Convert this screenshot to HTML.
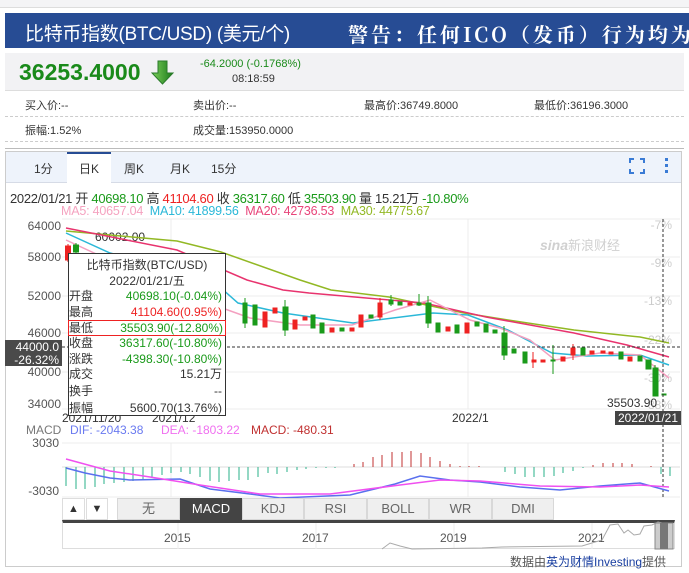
<!DOCTYPE html>
<html><head><meta charset="utf-8"><style>
*{margin:0;padding:0;box-sizing:border-box}
body{width:689px;height:573px;background:#fff;font-family:"Liberation Sans","Noto Sans CJK SC",sans-serif;position:relative;overflow:hidden;color:#333}
.a{position:absolute;white-space:nowrap}
.r{position:relative;height:15.5px}
.r b{font-weight:normal;position:absolute;right:3px}
</style></head><body>
<div class="a" style="left:0;top:0;width:689px;height:8px;background:#f4f4f6;border-bottom:1px solid #ddd"></div>
<div class="a" style="left:5px;top:13px;width:684px;height:35px;background:#274c94"></div>
<div class="a" style="left:25px;top:19px;font-size:19px;color:#fff;letter-spacing:-0.3px">比特币指数(BTC/USD) (美元/个)</div>
<div class="a" style="left:348px;top:19px;font-size:20px;color:#fff;font-weight:bold;font-family:'Noto Serif CJK SC',serif;letter-spacing:3px">警告：任何ICO（发币）行为均为</div>
<div class="a" style="left:5px;top:53px;width:679px;height:38px;background:#f2f2f4;border-bottom:1px solid #ddd"></div>
<div class="a" style="left:19px;top:59px;font-size:23px;font-weight:bold;color:#1a8a1a">36253.4000</div>
<svg class="a" style="left:151px;top:60px" width="24" height="25"><defs><linearGradient id="g" x1="0" x2="1"><stop offset="0" stop-color="#7ccf5a"/><stop offset="1" stop-color="#1a7a1a"/></linearGradient></defs><path d="M7 1h9v12h6L11.5 24 1 13h6z" fill="url(#g)" stroke="#2a7a2a"/></svg>
<div class="a" style="left:200px;top:58px;font-size:11px;color:#1a8a1a">-64.2000 (-0.1768%)</div>
<div class="a" style="left:232px;top:73px;font-size:11px;color:#333">08:18:59</div>
<div class="a" style="left:5px;top:116px;width:679px;border-top:1px dashed #ccc"></div>
<div class="a" style="left:5px;top:141px;width:679px;border-top:1px dashed #ccc"></div>
<div class="a" style="left:5px;top:148px;width:679px;border-top:1px solid #bbb"></div>
<div class="a" style="left:25px;top:97px;font-size:11px">买入价:--</div>
<div class="a" style="left:193px;top:97px;font-size:11px">卖出价:--</div>
<div class="a" style="left:364px;top:97px;font-size:11px">最高价:36749.8000</div>
<div class="a" style="left:534px;top:97px;font-size:11px">最低价:36196.3000</div>
<div class="a" style="left:25px;top:122px;font-size:11px">振幅:1.52%</div>
<div class="a" style="left:193px;top:122px;font-size:11px">成交量:153950.0000</div>

<div class="a" style="left:5px;top:151px;width:677px;height:416px;border:1px solid #ccc"></div>
<div class="a" style="left:6px;top:152px;width:675px;height:31px;background:#eef3fb;border-bottom:1px solid #d6dbe6"></div>
<div class="a" style="left:67px;top:152px;width:44px;height:32px;background:#fff;border-top:2px solid #274c94"></div>
<div class="a" style="left:34px;top:160px;font-size:12px">1分</div>
<div class="a" style="left:79px;top:160px;font-size:12px">日K</div>
<div class="a" style="left:124px;top:160px;font-size:12px">周K</div>
<div class="a" style="left:170px;top:160px;font-size:12px">月K</div>
<div class="a" style="left:211px;top:160px;font-size:12px">15分</div>
<svg class="a" style="left:628px;top:157px" width="50" height="20"><g stroke="#3a7bd5" stroke-width="2" fill="none"><path d="M2 6V2h4M12 2h4v4M16 12v4h-4M6 16H2v-4"/></g><g fill="#3a7bd5"><rect x="37" y="1" width="3" height="3"/><rect x="37" y="7" width="3" height="3"/><rect x="37" y="13" width="3" height="3"/></g></svg>

<div class="a" style="left:10px;top:188px;font-size:13px;letter-spacing:-0.3px">2022/01/21 开 <span style="color:#1a9a1a">40698.10</span> 高 <span style="color:#e22">41104.60</span> 收 <span style="color:#1a9a1a">36317.60</span> 低 <span style="color:#1a9a1a">35503.90</span> 量 15.21万 <span style="color:#1a9a1a">-10.80%</span></div>
<div class="a" style="left:61px;top:204px;font-size:12.5px;letter-spacing:-0.2px"><span style="color:#f5a3c0">MA5: 40657.04</span>&nbsp;&nbsp;<span style="color:#2bb8d8">MA10: 41899.56</span>&nbsp;&nbsp;<span style="color:#e8457a">MA20: 42736.53</span>&nbsp;&nbsp;<span style="color:#92b824">MA30: 44775.67</span></div>

<svg class="a" style="left:0;top:0" width="689" height="573" font-family="Liberation Sans,sans-serif">
<g stroke="#ececec" stroke-width="1">
<line x1="62" y1="219" x2="680" y2="219"/><line x1="62" y1="257" x2="680" y2="257"/><line x1="62" y1="296" x2="680" y2="296"/><line x1="62" y1="333" x2="680" y2="333"/><line x1="62" y1="372" x2="680" y2="372"/><line x1="62" y1="409" x2="680" y2="409"/>
<line x1="171" y1="219" x2="171" y2="409"/><line x1="468" y1="219" x2="468" y2="409"/>
<line x1="62" y1="443" x2="680" y2="443"/><line x1="62" y1="497" x2="680" y2="497"/><line x1="171" y1="443" x2="171" y2="497"/><line x1="468" y1="443" x2="468" y2="497"/>
</g>
<line x1="62" y1="467" x2="680" y2="467" stroke="#ddd"/>
<g font-size="12" fill="#555" text-anchor="end">
<text x="61" y="230">64000</text><text x="61" y="261">58000</text><text x="61" y="300">52000</text><text x="61" y="337">46000</text><text x="61" y="376">40000</text><text x="61" y="408">34000</text>
<text x="59" y="447">3030</text><text x="59" y="495">-3030</text>
</g>
<g font-size="12" fill="#ccc" text-anchor="end">
<text x="672" y="229">-7%</text><text x="672" y="267">-9%</text><text x="672" y="305">-13%</text><text x="672" y="344">-22%</text><text x="672" y="382">-30%</text><text x="672" y="409">-38%</text>
</g>
<text x="540" y="250" font-size="14" fill="#d0d0d0" font-style="italic" font-weight="bold">sina</text><text x="568" y="250" font-size="13" fill="#d0d0d0">新浪财经</text>
<text x="95" y="241" font-size="12" fill="#333">60002.00</text>
<g stroke-width="1.5" fill="none">
<polyline stroke="#92b824" points="66,231 132,237 177,241 221,252 300,280 331,290 389,297 464,313 508,320 574,330 640,337 669,343"/>
<polyline stroke="#e8336e" points="66,228 177,250 247,280 283,290 309,293 424,303 486,317 574,333 627,345 669,357"/>
<polyline stroke="#2bb8d8" points="66,233 110,253 177,270 212,280 238,303 283,313 353,323 433,313 468,315 508,330 552,353 587,356 640,355 669,365"/>
<polyline stroke="#f4a0c0" points="66,240 120,265 200,300 250,318 300,325 352,325 395,310 430,300 470,320 500,328 530,340 555,360 600,353 640,355 669,378"/>
</g>
<g stroke-width="1">
<g fill="#e22" stroke="#e22"><line x1="68" y1="244" x2="68" y2="262"/><rect x="65.5" y="246" width="5" height="14"/></g>
<g fill="#1a9a1a" stroke="#1a9a1a"><line x1="76" y1="243" x2="76" y2="255"/><rect x="73.5" y="245" width="5" height="7"/></g>
<g fill="#1a9a1a" stroke="#1a9a1a">
<rect x="243" y="303" width="4" height="20"/><rect x="253" y="305" width="4" height="20"/><rect x="283" y="307" width="5" height="23"/><rect x="311" y="315" width="4" height="13"/><rect x="320" y="323" width="4" height="10"/><rect x="340" y="328" width="4" height="3"/><rect x="369" y="315" width="4" height="3"/><rect x="389" y="300" width="4" height="4"/><rect x="398" y="302" width="4" height="3"/><rect x="417" y="303" width="4" height="2"/><rect x="426" y="303" width="5" height="20"/><rect x="436" y="323" width="4" height="9"/><rect x="455" y="325" width="4" height="8"/><rect x="475" y="322" width="4" height="4"/><rect x="484" y="324" width="4" height="8"/><rect x="493" y="330" width="4" height="3"/><rect x="502" y="333" width="5" height="22"/><rect x="512" y="349" width="4" height="4"/><rect x="523" y="352" width="4" height="11"/><rect x="551" y="360" width="4" height="1"/><rect x="581" y="348" width="4" height="7"/><rect x="619" y="352" width="4" height="7"/><rect x="638" y="356" width="4" height="5"/><rect x="646" y="360" width="5" height="9"/><rect x="653" y="368" width="5" height="28"/><rect x="662" y="394" width="4" height="1"/>
<line x1="245" y1="298" x2="245" y2="328"/><line x1="285" y1="300" x2="285" y2="336"/><line x1="428" y1="296" x2="428" y2="328"/><line x1="504" y1="326" x2="504" y2="360"/><line x1="553" y1="345" x2="553" y2="374"/><line x1="655" y1="365" x2="655" y2="396"/><line x1="391" y1="295" x2="391" y2="306"/><line x1="419" y1="294" x2="419" y2="306"/>
</g>
<g fill="#e22" stroke="#e22">
<rect x="263" y="312" width="4" height="15"/><rect x="273" y="308" width="4" height="5"/><rect x="293" y="320" width="4" height="9"/><rect x="303" y="317" width="4" height="3"/><rect x="330" y="328" width="4" height="4"/><rect x="350" y="328" width="4" height="3"/><rect x="359" y="315" width="4" height="12"/><rect x="378" y="303" width="4" height="14"/><rect x="408" y="303" width="4" height="2"/><rect x="446" y="327" width="4" height="4"/><rect x="465" y="323" width="4" height="10"/><rect x="532" y="360" width="4" height="2"/><rect x="541" y="360" width="4" height="2"/><rect x="561" y="357" width="4" height="4"/><rect x="571" y="348" width="4" height="7"/><rect x="590" y="351" width="4" height="3"/><rect x="601" y="351" width="4" height="2"/><rect x="609" y="352" width="4" height="2"/><rect x="628" y="357" width="4" height="4"/>
<line x1="533" y1="352" x2="533" y2="368"/><line x1="573" y1="344" x2="573" y2="360"/><line x1="380" y1="298" x2="380" y2="320"/>
</g>
</g>
<line x1="62" y1="347" x2="680" y2="347" stroke="#333" stroke-dasharray="3,2"/>
<line x1="663" y1="219" x2="663" y2="497" stroke="#333" stroke-dasharray="3,2"/>
<rect x="5" y="340" width="57" height="26" fill="#4a4a4a"/>
<text x="59" y="351" font-size="12" fill="#fff" text-anchor="end">44000.0</text><text x="59" y="364" font-size="12" fill="#fff" text-anchor="end">-26.32%</text>
<text x="607" y="407" font-size="12" fill="#333">35503.90</text>
<rect x="615" y="411" width="66" height="14" fill="#444"/><text x="648" y="422" font-size="12" fill="#fff" text-anchor="middle">2022/01/21</text>
<text x="62" y="422" font-size="12" fill="#333">2021/11/20</text><text x="152" y="422" font-size="12" fill="#333">2021/12</text><text x="452" y="422" font-size="12" fill="#333">2022/1</text>
<text x="26" y="434" font-size="12" fill="#777">MACD</text><text x="70" y="434" font-size="12" fill="#6a7af0">DIF: -2043.38</text><text x="161" y="434" font-size="12" fill="#f070f0">DEA: -1803.22</text><text x="251" y="434" font-size="12" fill="#c03030">MACD: -480.31</text>
<g stroke="#2ab08a" stroke-width="1">
<path d="M66 467v19M76 467v22M85 467v22M95 467v20M104 467v17M114 467v16M124 467v15M133 467v14M143 467v12M152 467v11M162 467v8M171 467v6M181 467v5M190 467v7M200 467v10M210 467v14M219 467v15M229 467v14M239 467v13M248 467v13M258 467v10M268 467v6M277 467v7M287 467v5M297 467v3M306 467v2M316 467v1M326 467v1M335 467v1M505 467v5M515 467v7M525 467v10M534 467v10M544 467v10M554 467v9M563 467v6M573 467v4M583 467v1M661 467v7M670 467v9"/>
</g>
<g stroke="#c03030" stroke-width="1">
<path d="M354 467v-3M363 467v-5M373 467v-10M382 467v-12M392 467v-15M402 467v-15M411 467v-16M421 467v-14M430 467v-10M440 467v-6M450 467v-3M460 467v-1M469 467v-1M479 467v-1M593 467v-2M603 467v-4M613 467v-4M622 467v-4M632 467v-3M651 467v-1"/>
</g>
<polyline fill="none" stroke="#5a70ee" stroke-width="1.5" points="66,468 85,473 110,478 130,480 180,479 210,489 250,494 280,498 350,495 395,484 420,476 450,480 480,482 520,487 560,490 600,486 640,483 669,491"/>
<polyline fill="none" stroke="#f050f0" stroke-width="1.5" points="66,459 110,471 150,477 200,485 260,494 330,494 400,485 440,480 480,481 540,486 600,487 640,485 669,487"/>
</svg>

<div class="a" style="left:68px;top:253px;width:158px;height:163px;background:#fff;border:1px solid #333;font-size:12px;line-height:15.5px">
<div style="text-align:center;padding-top:4px">比特币指数(BTC/USD)</div>
<div style="text-align:center">2022/01/21/五</div>
<div class="r"><span>开盘</span><b style="color:#1a9a1a">40698.10(-0.04%)</b></div>
<div class="r"><span>最高</span><b style="color:#e22">41104.60(0.95%)</b></div>
<div class="r" style="border:1px solid #e22;margin:0 -1px;height:16px;line-height:14px"><span>最低</span><b style="color:#1a9a1a;right:2px">35503.90(-12.80%)</b></div>
<div class="r"><span>收盘</span><b style="color:#1a9a1a">36317.60(-10.80%)</b></div>
<div class="r"><span>涨跌</span><b style="color:#1a9a1a">-4398.30(-10.80%)</b></div>
<div class="r" style="height:17px"><span>成交</span><b>15.21万</b></div>
<div class="r" style="height:17px"><span>换手</span><b>--</b></div>
<div class="r"><span>振幅</span><b>5600.70(13.76%)</b></div>
</div>

<div class="a" style="left:62px;top:498px;width:23px;height:22px;border:1px solid #ddd;font-size:11px;text-align:center;line-height:20px">▲</div>
<div class="a" style="left:86px;top:498px;width:22px;height:22px;border:1px solid #ddd;font-size:11px;text-align:center;line-height:20px">▼</div>
<div class="a" style="left:117px;top:498px;display:flex;font-size:13px;color:#666">
<div style="width:63px;height:22px;background:#efefef;border:1px solid #d8d8d8;text-align:center;line-height:20px">无</div>
<div style="width:62px;height:22px;background:#444;color:#fff;text-align:center;line-height:22px">MACD</div>
<div style="width:62px;height:22px;background:#efefef;border:1px solid #d8d8d8;text-align:center;line-height:20px">KDJ</div>
<div style="width:63px;height:22px;background:#efefef;border:1px solid #d8d8d8;text-align:center;line-height:20px">RSI</div>
<div style="width:62px;height:22px;background:#efefef;border:1px solid #d8d8d8;text-align:center;line-height:20px">BOLL</div>
<div style="width:63px;height:22px;background:#efefef;border:1px solid #d8d8d8;text-align:center;line-height:20px">WR</div>
<div style="width:62px;height:22px;background:#efefef;border:1px solid #d8d8d8;text-align:center;line-height:20px">DMI</div>
</div>
<div class="a" style="left:62px;top:520px;width:613px;height:29px;border:1px solid #ddd;border-top:3px solid #444"></div>
<svg class="a" style="left:62px;top:520px" width="613" height="30">
<g stroke="#eee"><line x1="116" y1="3" x2="116" y2="29"/><line x1="254" y1="3" x2="254" y2="29"/><line x1="392" y1="3" x2="392" y2="29"/><line x1="530" y1="3" x2="530" y2="29"/></g>
<g font-size="12" fill="#555"><text x="102" y="22">2015</text><text x="240" y="22">2017</text><text x="378" y="22">2019</text><text x="516" y="22">2021</text></g>
<polyline fill="none" stroke="#aaa" points="320,29 328,23 338,26 350,29 420,28 440,27 520,26 540,20 548,5 556,4 562,13 566,10 572,15 578,14 582,6 590,5 596,2 600,3"/>
<rect x="593" y="3" width="18" height="26" fill="#ccc" stroke="#888"/><rect x="598" y="3" width="8" height="26" fill="#777"/>
</svg>
<div class="a" style="left:510px;top:553px;font-size:12px;color:#555">数据由<span style="color:#1a3fa0">英为财情Investing</span>提供</div>
</body></html>
